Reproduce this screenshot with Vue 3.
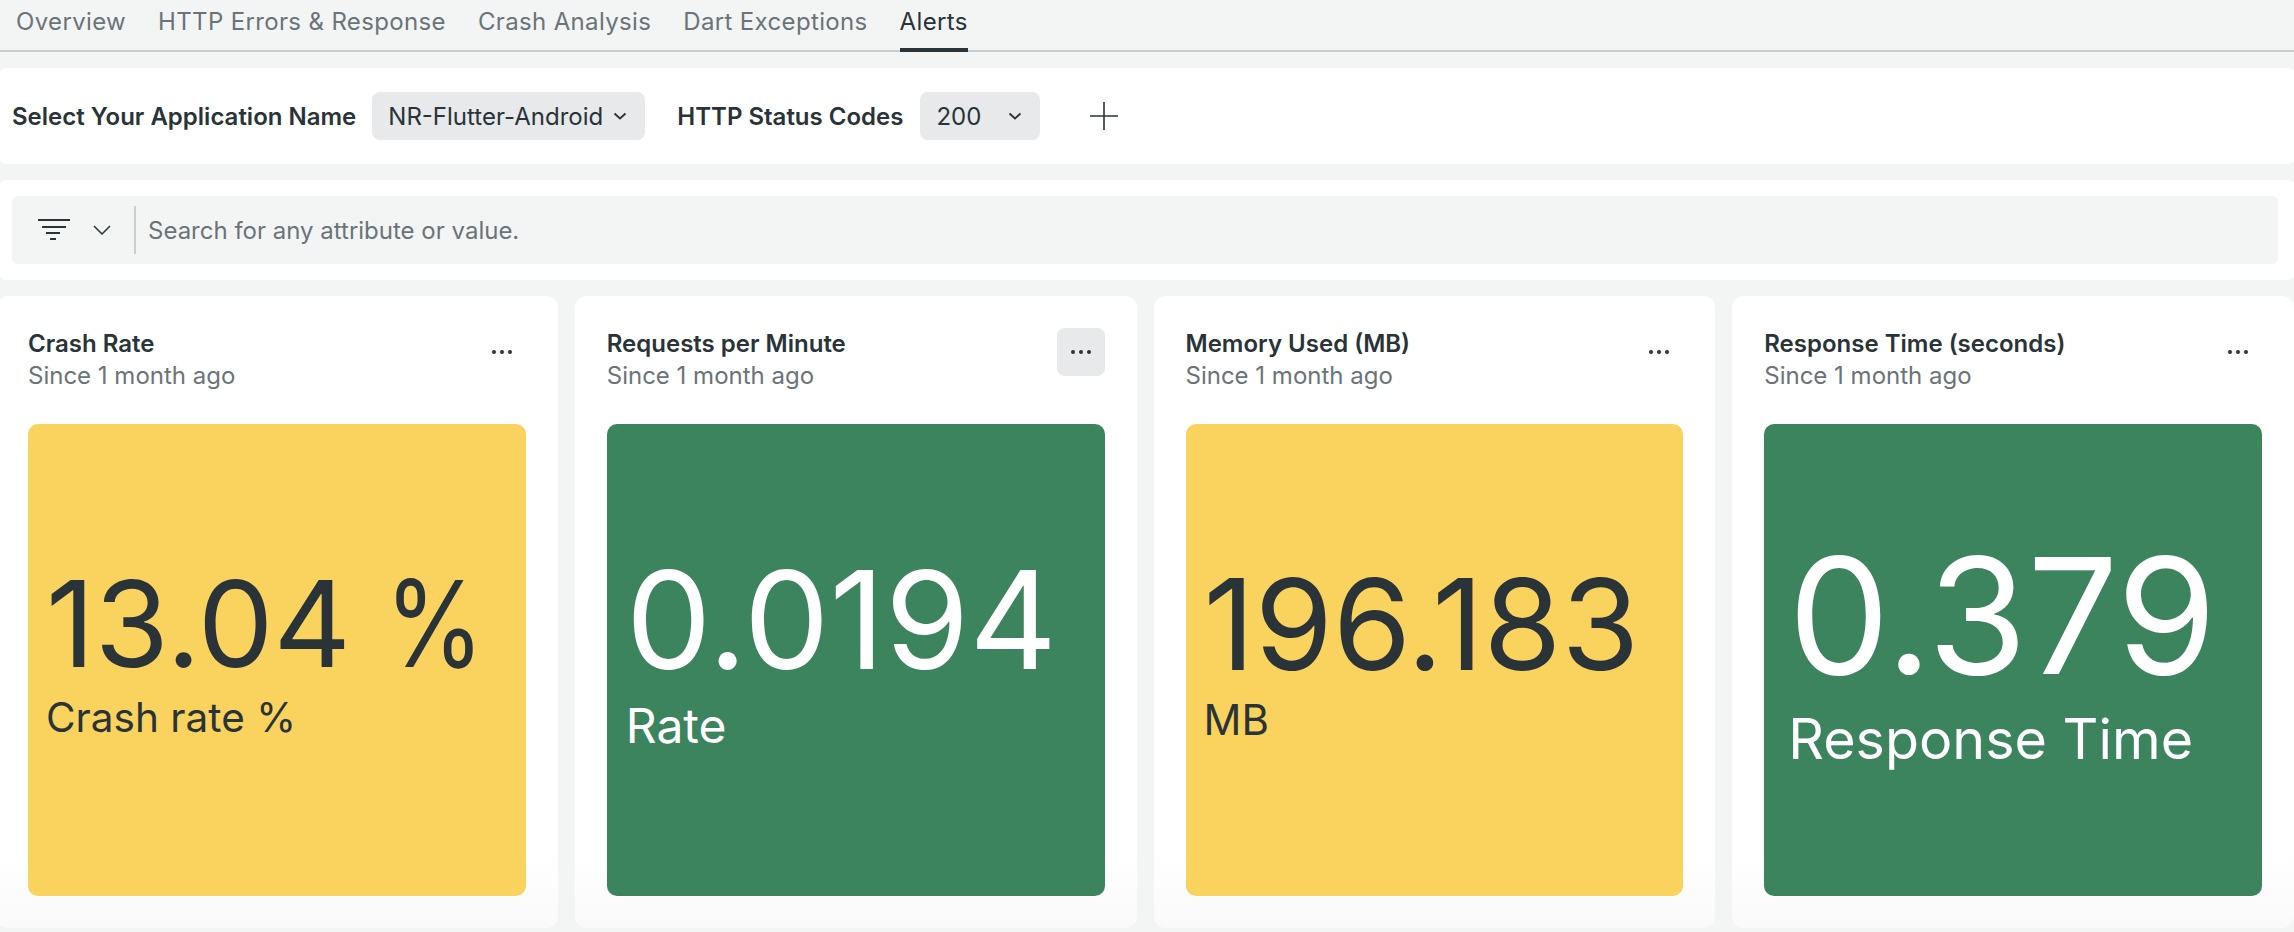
<script setup>
const tabs = ['Overview', 'HTTP Errors & Response', 'Crash Analysis', 'Dart Exceptions', 'Alerts']

const cards = [
  { title: 'Crash Rate', value: '13.04', unit: '%', label: 'Crash rate %', tone: 'warn', valueSize: 120, labelSize: 40.5, pad: 18, gap: 4 },
  { title: 'Requests per Minute', value: '0.0194', label: 'Rate', tone: 'ok', valueSize: 136, labelSize: 48, pad: 19, gap: 2 },
  { title: 'Memory Used (MB)', value: '196.183', label: 'MB', tone: 'warn', valueSize: 126, labelSize: 42, pad: 18, gap: 1 },
  { title: 'Response Time (seconds)', value: '0.379', label: 'Response Time', tone: 'ok', valueSize: 161, labelSize: 55.6, pad: 24, gap: 2 }
]
</script>

<template>
  <div class="page">
    <nav class="tabs">
      <a v-for="tab in tabs" :key="tab" class="tab" :class="{ active: tab === 'Alerts' }">{{ tab }}</a>
    </nav>

    <section class="panel toolbar">
      <span class="field-label">Select Your Application Name</span>
      <div class="select app-select">
        <span>NR-Flutter-Android</span>
        <svg width="14" height="8" viewBox="0 0 14 8" fill="none">
          <path d="M1.5 1.5L7 6.5L12.5 1.5" stroke="#293338" stroke-width="1.8" />
        </svg>
      </div>
      <span class="field-label status-label">HTTP Status Codes</span>
      <div class="select status-select">
        <span>200</span>
        <svg width="14" height="8" viewBox="0 0 14 8" fill="none">
          <path d="M1.5 1.5L7 6.5L12.5 1.5" stroke="#293338" stroke-width="1.8" />
        </svg>
      </div>
      <svg class="plus" width="28" height="28" viewBox="0 0 28 28" fill="none">
        <path d="M14 0V28M0 14H28" stroke="#293338" stroke-width="1.6" />
      </svg>
    </section>

    <section class="panel filter">
      <div class="search">
        <svg class="filter-icon" width="32" height="22" viewBox="0 0 32 22" fill="none">
          <path d="M0 1H32M4 8H28M8 14H22M12 20H18" stroke="#293338" stroke-width="2" />
        </svg>
        <svg class="filter-chevron" width="18" height="10" viewBox="0 0 18 10" fill="none">
          <path d="M1 1L9 9L17 1" stroke="#293338" stroke-width="1.5" />
        </svg>
        <span class="divider"></span>
        <span class="placeholder">Search for any attribute or value.</span>
      </div>
    </section>

    <section class="cards">
      <article v-for="(card, index) in cards" :key="card.title" class="card">
        <header class="card-head">
          <div>
            <h3>{{ card.title }}</h3>
            <p>Since 1 month ago</p>
          </div>
          <button class="menu" :class="{ hover: index === 1 }">
            <svg width="22" height="6" viewBox="0 0 22 6">
              <circle cx="3" cy="3" r="2" fill="#293338" />
              <circle cx="11" cy="3" r="2" fill="#293338" />
              <circle cx="19" cy="3" r="2" fill="#293338" />
            </svg>
          </button>
        </header>
        <div class="tile" :class="card.tone" :style="{ paddingLeft: card.pad + 'px' }">
          <div class="value" :style="{ fontSize: card.valueSize + 'px' }">
            {{ card.value }}<span v-if="card.unit" class="unit">{{ card.unit }}</span>
          </div>
          <div class="label" :style="{ fontSize: card.labelSize + 'px', marginTop: card.gap + 'px' }">{{ card.label }}</div>
        </div>
      </article>
    </section>
  </div>
</template>

<style scoped>
.page {
  width: 2294px;
  height: 932px;
  overflow: hidden;
  background: #f3f5f4;
  font-family: Inter, "Liberation Sans", sans-serif;
  color: #293338;
}

.tabs {
  display: flex;
  gap: 32px;
  height: 52px;
  padding-left: 16px;
  box-sizing: border-box;
  border-bottom: 2px solid #c9cfd1;
}

.tab {
  height: 52px;
  box-sizing: border-box;
  padding-top: 7px;
  font-size: 24px;
  letter-spacing: 0.35px;
  line-height: 30px;
  color: #6b7378;
}

.tab.active {
  color: #293338;
  border-bottom: 4px solid #293338;
}

.panel {
  background: #fff;
  border-radius: 6px;
}

.toolbar {
  display: flex;
  align-items: center;
  height: 96px;
  margin-top: 16px;
  padding-left: 12px;
}

.field-label {
  font-size: 24px;
  font-weight: 600;
}

.select {
  display: flex;
  align-items: center;
  justify-content: space-between;
  box-sizing: border-box;
  height: 48px;
  margin-left: 16px;
  padding: 0 18px 0 16px;
  border-radius: 8px;
  background: #e7e9ea;
  font-size: 24px;
}

.app-select {
  width: 273px;
}

.status-label {
  margin-left: 32px;
}

.status-select {
  width: 120px;
  margin-left: 17px;
}

.plus {
  margin-left: 50px;
}

.filter {
  height: 100px;
  margin-top: 16px;
  padding: 16px 16px 16px 12px;
  box-sizing: border-box;
}

.search {
  display: flex;
  align-items: center;
  height: 68px;
  border-radius: 6px;
  background: #f3f5f4;
}

.filter-icon {
  margin-left: 26px;
}

.filter-chevron {
  margin-left: 23px;
}

.divider {
  width: 2px;
  height: 48px;
  margin-left: 23px;
  background: #c9cfd1;
}

.placeholder {
  margin-left: 12px;
  font-size: 24px;
  color: #6b7378;
}

.cards {
  display: grid;
  grid-template-columns: repeat(4, 1fr);
  gap: 17px;
  height: 632px;
  margin-top: 16px;
  margin-left: -4px;
}

.card {
  display: flex;
  flex-direction: column;
  box-sizing: border-box;
  padding: 32px 32px 32px;
  border-radius: 12px;
  background: linear-gradient(#fff 88%, #fafafa);
}

.card-head {
  display: flex;
  justify-content: space-between;
  height: 96px;
}

.card-head h3 {
  margin: 1px 0 0;
  font-size: 24px;
  line-height: 30px;
  font-weight: 600;
}

.card-head p {
  margin: 1px 0 0;
  font-size: 24px;
  line-height: 32px;
  color: #6b7378;
}

.menu {
  display: flex;
  align-items: center;
  justify-content: center;
  width: 48px;
  height: 48px;
  padding: 0;
  border: none;
  border-radius: 8px;
  background: none;
}

.menu.hover {
  background: #e7e9ea;
}

.tile {
  display: flex;
  flex-direction: column;
  justify-content: center;
  height: 472px;
  padding-bottom: 20px;
  box-sizing: border-box;
  border-radius: 10px;
}

.tile.warn {
  background: #fad35e;
  color: #293338;
}

.tile.ok {
  background: #3c845e;
  color: #fff;
}

.value {
  line-height: 1.1;
  white-space: nowrap;
}

/* the percent sign is narrower in the reference than Inter's own */
.unit {
  display: inline-block;
  margin-left: 34px;
  transform: scaleX(0.84);
  transform-origin: left center;
}

.label {
  line-height: 1.2;
  white-space: nowrap;
}
</style>

<style>
html, body {
  margin: 0;
  background: #f3f5f4;
}
</style>
